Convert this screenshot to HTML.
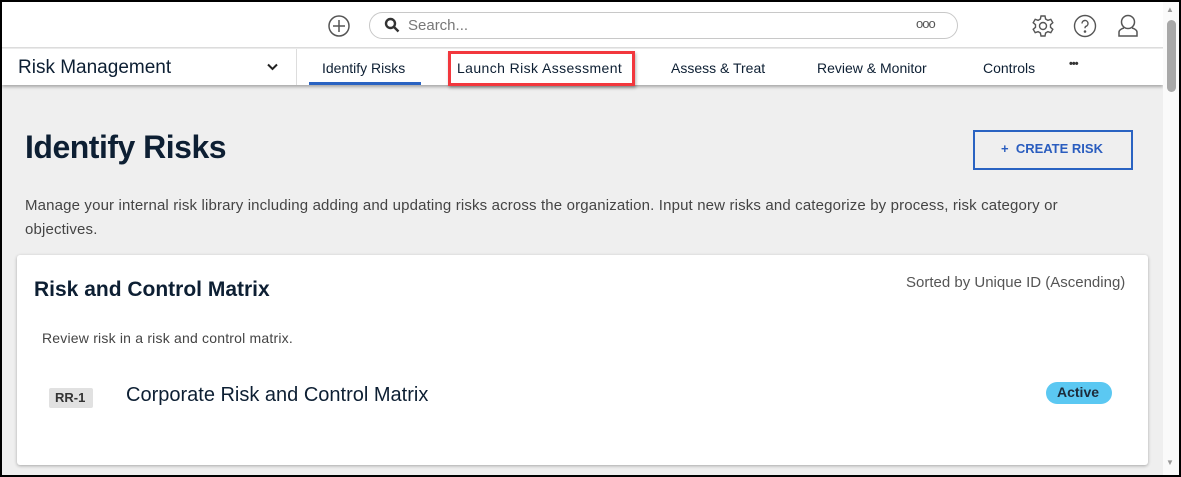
<!DOCTYPE html>
<html><head><meta charset="utf-8"><style>
*{box-sizing:border-box;margin:0;padding:0}
body{width:1181px;height:477px;overflow:hidden;font-family:"Liberation Sans",sans-serif;background:#000;position:relative}
.frame{position:absolute;left:2px;top:2px;width:1177px;height:473px;background:#efefef;overflow:hidden}
.top{position:absolute;left:0;top:0;width:1161px;height:46px;background:#fff;border-bottom:1px solid #dcdcdc}
.nav{position:absolute;left:0;top:47px;width:1161px;height:36px;background:#fff;box-shadow:0 2px 3px rgba(0,0,0,.3)}
.t{position:absolute;white-space:nowrap}
.sb{position:absolute;left:1161px;top:0;width:16px;height:473px;background:#fafafa}
.card{position:absolute;left:15px;top:253px;width:1131px;height:210px;background:#fff;border-radius:3px;box-shadow:0 1px 3px rgba(0,0,0,.3)}
</style></head><body><div class="frame">
<div class="top">
<svg style="position:absolute;left:326px;top:13px" width="22" height="22" viewBox="0 0 22 22" fill="none" stroke="#555" stroke-width="1.5"><circle cx="11" cy="11" r="10"/><path d="M11 5v12M5 11h12"/></svg>
<div style="position:absolute;left:367px;top:10px;width:589px;height:27px;border:1px solid #c8c8c8;border-radius:14px"></div>
<svg style="position:absolute;left:382px;top:15px" width="16" height="16" viewBox="0 0 16 16" fill="none" stroke="#333" stroke-width="2.4"><circle cx="6.5" cy="6.5" r="4.5"/><path d="M10 10l4.5 4.5"/></svg>
<div class="t" style="left:406px;top:15px;font-size:15px;color:#777">Search...</div>
<div class="t" style="left:914px;top:14px;font-size:13px;color:#555;letter-spacing:-1px">ooo</div>
<svg style="position:absolute;left:1029px;top:12px" width="24" height="24" viewBox="0 0 24 24" fill="none" stroke="#555" stroke-width="1.4"><circle cx="12" cy="12" r="3.5"/><path d="M10 2h4l.6 3 2.3 1.3 2.9-1 2 3.4-2.3 2v2.6l2.3 2-2 3.4-2.9-1-2.3 1.3-.6 3h-4l-.6-3-2.3-1.3-2.9 1-2-3.4 2.3-2v-2.6l-2.3-2 2-3.4 2.9 1L9.4 5z"/></svg>
<svg style="position:absolute;left:1071px;top:12px" width="24" height="24" viewBox="0 0 24 24" fill="none" stroke="#555" stroke-width="1.4"><circle cx="12" cy="12" r="10.5"/><path d="M9 9.5a3 3 0 1 1 4 2.8c-.8.4-1 1-1 2"/><circle cx="12" cy="17.5" r=".6" fill="#555"/></svg>
<svg style="position:absolute;left:1113px;top:11px" width="26" height="26" viewBox="0 0 26 26" fill="none" stroke="#555" stroke-width="1.5"><circle cx="13" cy="9" r="6.5"/><path d="M9 15c-2 .5-5 2-5 4v4h18v-4c0-2-3-3.5-5-4"/></svg>
</div>
<div class="nav">
<div class="t" style="left:16px;top:8px;font-size:19px;color:#0d1f33">Risk Management</div>
<svg style="position:absolute;left:265px;top:14px" width="11" height="8" viewBox="0 0 11 8" fill="none" stroke="#222" stroke-width="2"><path d="M1 1.5l4.5 4.5 4.5-4.5"/></svg>
<div style="position:absolute;left:294px;top:0;width:1px;height:36px;background:#ddd"></div>
<div class="t" style="left:320px;top:11px;font-size:14px;color:#0d1f33">Identify Risks</div>
<div style="position:absolute;left:307px;top:33px;width:112px;height:3px;background:#2a63c2"></div>
<div style="position:absolute;left:446px;top:2px;width:187px;height:35px;border:3px solid #f2373d;background:#fff;box-shadow:1px 2px 3px rgba(0,0,0,.3)"></div>
<div class="t" style="left:455px;top:11px;font-size:14px;color:#0d1f33;letter-spacing:0.4px">Launch Risk Assessment</div>
<div class="t" style="left:669px;top:11px;font-size:14px;color:#0d1f33">Assess &amp; Treat</div>
<div class="t" style="left:815px;top:11px;font-size:14px;color:#0d1f33">Review &amp; Monitor</div>
<div class="t" style="left:981px;top:11px;font-size:14px;color:#0d1f33">Controls</div>
<div class="t" style="left:1067px;top:9px;font-size:11px;color:#333;font-weight:bold;letter-spacing:-1px">•••</div>
</div>
<div class="sb"><div style="position:absolute;left:4px;top:18px;width:9px;height:72px;background:#a8a8a8;border-radius:5px"></div>
<div class="t" style="left:3px;top:3px;font-size:8px;color:#999">▲</div><div class="t" style="left:3px;top:456px;font-size:8px;color:#999">▼</div></div>
<div class="t" style="left:23px;top:127px;font-size:32px;color:#0d1f33;font-weight:bold;letter-spacing:-0.5px">Identify Risks</div>
<div style="position:absolute;left:971px;top:128px;width:160px;height:40px;border:2px solid #2a63c2"></div>
<div class="t" style="left:999px;top:139px;font-size:13px;color:#2a5dbf;font-weight:bold">+&nbsp;&nbsp;CREATE RISK</div>
<div class="t" style="left:23px;top:192px;font-size:15px;color:#444;line-height:24px;letter-spacing:0.15px">Manage your internal risk library including adding and updating risks across the organization. Input new risks and categorize by process, risk category or<br>objectives.</div>
<div class="card">
<div class="t" style="left:17px;top:23px;font-size:21px;color:#0d1f33;font-weight:bold">Risk and Control Matrix</div>
<div class="t" style="left:889px;top:19px;font-size:15px;color:#555">Sorted by Unique ID (Ascending)</div>
<div class="t" style="left:25px;top:75px;font-size:14px;color:#444;letter-spacing:0.2px">Review risk in a risk and control matrix.</div>
<div style="position:absolute;left:32px;top:133px;width:44px;height:20px;background:#e1e1e1;border-radius:2px"></div>
<div class="t" style="left:38px;top:135px;font-size:13px;color:#333;font-weight:bold">RR-1</div>
<div class="t" style="left:109px;top:129px;font-size:20px;color:#0d1f33">Corporate Risk and Control Matrix</div>
<div style="position:absolute;left:1029px;top:127px;width:66px;height:22px;background:#5bc8f2;border-radius:11px"></div>
<div class="t" style="left:1040px;top:129px;font-size:14px;color:#1d2b3a;font-weight:bold">Active</div>
</div>
</div></body></html>
